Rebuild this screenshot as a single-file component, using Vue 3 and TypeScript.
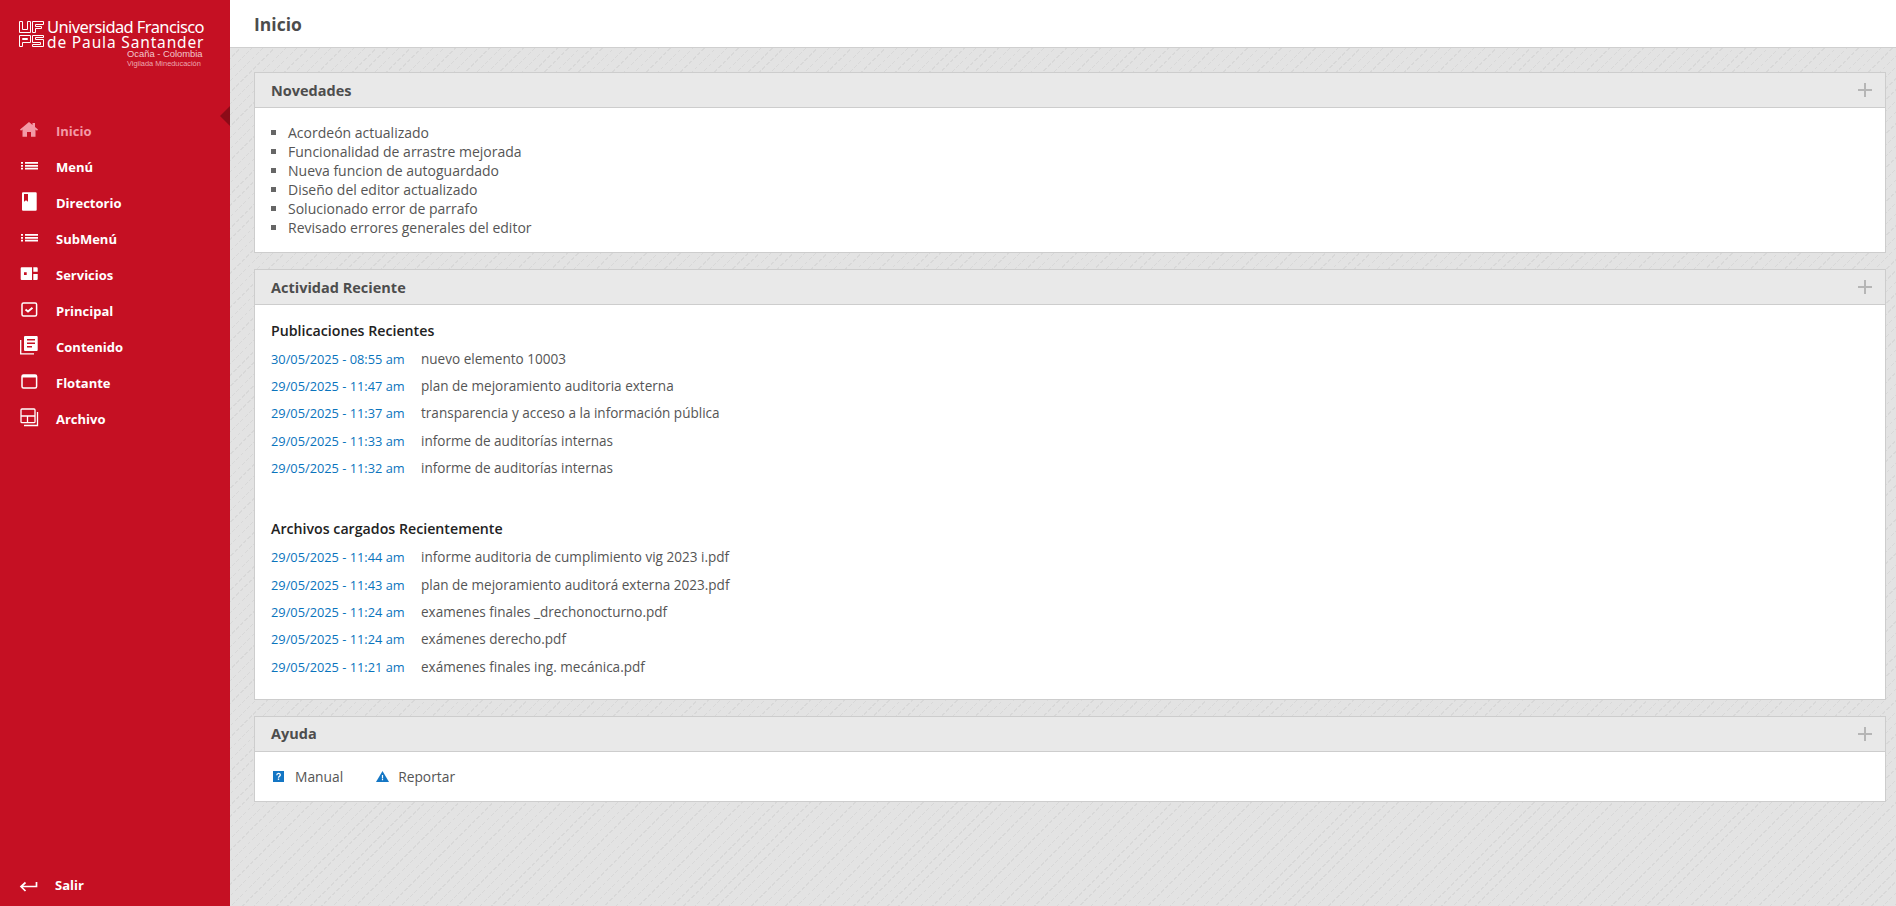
<script setup lang="ts">
interface NavItem {
  label: string
  icon: string
  active?: boolean
}

interface Entry {
  date: string
  title: string
}

const navItems: NavItem[] = [
  { label: 'Inicio', icon: 'home', active: true },
  { label: 'Menú', icon: 'list' },
  { label: 'Directorio', icon: 'book' },
  { label: 'SubMenú', icon: 'list' },
  { label: 'Servicios', icon: 'tiles' },
  { label: 'Principal', icon: 'check' },
  { label: 'Contenido', icon: 'news' },
  { label: 'Flotante', icon: 'window' },
  { label: 'Archivo', icon: 'layers' },
]

const news = [
  'Acordeón actualizado',
  'Funcionalidad de arrastre mejorada',
  'Nueva funcion de autoguardado',
  'Diseño del editor actualizado',
  'Solucionado error de parrafo',
  'Revisado errores generales del editor',
]

const posts: Entry[] = [
  { date: '30/05/2025 - 08:55 am', title: 'nuevo elemento 10003' },
  { date: '29/05/2025 - 11:47 am', title: 'plan de mejoramiento auditoria externa' },
  { date: '29/05/2025 - 11:37 am', title: 'transparencia y acceso a la información pública' },
  { date: '29/05/2025 - 11:33 am', title: 'informe de auditorías internas' },
  { date: '29/05/2025 - 11:32 am', title: 'informe de auditorías internas' },
]

const uploads: Entry[] = [
  { date: '29/05/2025 - 11:44 am', title: 'informe auditoria de cumplimiento vig 2023 i.pdf' },
  { date: '29/05/2025 - 11:43 am', title: 'plan de mejoramiento auditorá externa 2023.pdf' },
  { date: '29/05/2025 - 11:24 am', title: 'examenes finales _drechonocturno.pdf' },
  { date: '29/05/2025 - 11:24 am', title: 'exámenes derecho.pdf' },
  { date: '29/05/2025 - 11:21 am', title: 'exámenes finales ing. mecánica.pdf' },
]
</script>

<template>
  <div class="layout">
    <aside class="sidebar">
      <div class="brand">
        <svg class="brand-mark" width="25" height="26" viewBox="0 0 25 26" fill="none" stroke="#fff" stroke-width="1">
          <path d="M.5.5h3v8h5v-8h3v11h-11zM13.500.5h11v3h-8v2h6v2h-6v4h-3z" />
          <path d="M.5 14.500h11v7h-8v4h-3zM3.500 17.500v1h5v-1zM13.500 14.500h11v2h-8v2h8v7h-11v-2h8v-2h-8z" />
        </svg>
        <div class="brand-text">
          <div class="brand-line1">Universidad Francisco</div>
          <div class="brand-line2">de Paula Santander</div>
          <div class="brand-line3">Ocaña - Colombia</div>
          <div class="brand-line4">Vigilada Mineducación</div>
        </div>
      </div>

      <nav class="nav">
        <a v-for="item in navItems" :key="item.label" class="nav-item" :class="{ active: item.active }">
          <svg class="nav-icon" width="20" height="20" viewBox="0 0 20 20">
            <template v-if="item.icon === 'home'">
              <path fill="currentColor" d="M10 1 1 8.600l1 1.200 1.500-1.300v7.200H8V11h4v4.700h4.500V8.500L18 9.800l1-1.200L16 6V2h-2.500v2z" />
            </template>
            <template v-else-if="item.icon === 'list'">
              <path fill="currentColor" d="M2 5h2v1.800H2zM6 5h13v1.800H6zM2 7.900h2v1.800H2zM6 7.900h13v1.800H6zM2 10.800h2v1.800H2zM6 10.800h13v1.800H6z" />
            </template>
            <template v-else-if="item.icon === 'book'">
              <path fill="currentColor" fill-rule="evenodd" d="M4 -.7h12.700a1 1 0 0 1 1 1v16.400a1 1 0 0 1-1 1H4a1 1 0 0 1-1-1V.3a1 1 0 0 1 1-1zM5 1v7.700l2-1.500 2 1.500V1z" />
            </template>
            <template v-else-if="item.icon === 'tiles'">
              <path fill="currentColor" fill-rule="evenodd" d="M2.700 2.300H13V15H2.700a1 1 0 0 1-1-1V3.300a1 1 0 0 1 1-1zM5 7.300V10h2.700V7.300zM14.300 2.300h3.400a1 1 0 0 1 1 1v3.400h-4.400zM14.300 9h4.400v5a1 1 0 0 1-1 1h-3.400z" />
            </template>
            <template v-else-if="item.icon === 'check'">
              <rect x="3" y="2" width="14.600" height="13" rx="1.500" fill="none" stroke="currentColor" stroke-width="1.500" />
              <path fill="none" stroke="currentColor" stroke-width="2" d="m6.500 8.500 2.500 2 4.500-3.800" />
            </template>
            <template v-else-if="item.icon === 'news'">
              <path fill="currentColor" fill-rule="evenodd" d="M6 -1h11.700a1 1 0 0 1 1 1v13a1 1 0 0 1-1 1H6a1 1 0 0 1-1-1V0a1 1 0 0 1 1-1zM8 2v1.500h8V2zM8 5.500V7h8V5.500zM8 9v1.500h5V9z" />
              <path fill="none" stroke="currentColor" stroke-width="1.300" d="M1.700 3v13.800H15" />
            </template>
            <template v-else-if="item.icon === 'window'">
              <rect x="3" y="2" width="14.600" height="13" rx="1.500" fill="none" stroke="currentColor" stroke-width="1.500" />
              <path fill="currentColor" d="M3 2h14.600v2.500H3z" />
            </template>
            <template v-else>
              <rect x="2" y="0" width="14" height="13.700" rx="1" fill="none" stroke="currentColor" stroke-width="1.300" />
              <path fill="none" stroke="currentColor" stroke-width="1.300" d="M2 7h14M8.500 7v6.700M18.500 3v13.500H5" />
            </template>
          </svg>
          <span>{{ item.label }}</span>
        </a>
      </nav>

      <a class="logout">
        <svg width="20" height="14" viewBox="0 0 20 14" fill="none" stroke="currentColor" stroke-width="1.700">
          <path d="M17.500 4v4.500H2.500M6.500 4.500 2 8.500l4.500 4.500" />
        </svg>
        <span>Salir</span>
      </a>

      <span class="active-arrow"></span>
    </aside>

    <main class="main">
      <header class="topbar">Inicio</header>

      <div class="content">
        <section class="panel">
          <div class="panel-head">
            <h2>Novedades</h2>
            <span class="plus"></span>
          </div>
          <div class="panel-body news">
            <ul>
              <li v-for="line in news" :key="line">{{ line }}</li>
            </ul>
          </div>
        </section>

        <section class="panel">
          <div class="panel-head">
            <h2>Actividad Reciente</h2>
            <span class="plus"></span>
          </div>
          <div class="panel-body activity">
            <h3>Publicaciones Recientes</h3>
            <div v-for="(row, i) in posts" :key="i" class="entry">
              <span class="date">{{ row.date }}</span>
              <span>{{ row.title }}</span>
            </div>
            <h3 class="second">Archivos cargados Recientemente</h3>
            <div v-for="(row, i) in uploads" :key="'u' + i" class="entry">
              <span class="date">{{ row.date }}</span>
              <span>{{ row.title }}</span>
            </div>
          </div>
        </section>

        <section class="panel">
          <div class="panel-head">
            <h2>Ayuda</h2>
            <span class="plus"></span>
          </div>
          <div class="panel-body help">
            <a class="help-link">
              <svg width="11" height="11" viewBox="0 0 11 11">
                <rect width="11" height="11" fill="#1476c4" />
                <path fill="none" stroke="#fff" stroke-width="1.300" d="M3.800 4.200c0-2.300 3.500-2.300 3.500-.3 0 1.300-1.800 1.300-1.800 2.800" />
                <path fill="#fff" d="M4.800 7.500h1.400v1.400H4.800z" />
              </svg>
              <span>Manual</span>
            </a>
            <a class="help-link tight">
              <svg width="13" height="11" viewBox="0 0 13 11">
                <path fill="#1476c4" d="M6.500 0 13 11H0z" />
                <path fill="#fff" d="M5.900 4h1.200v3.500H5.900zM5.900 8h1.200v1.300H5.900z" />
              </svg>
              <span>Reportar</span>
            </a>
          </div>
        </section>
      </div>
    </main>
  </div>
</template>

<style scoped>
.layout {
  display: flex;
  height: 906px;
  font-family: 'Open Sans', 'Noto Sans', sans-serif;
  color: #555;
  overflow: hidden;
}

.sidebar {
  position: relative;
  flex: 0 0 230px;
  display: flex;
  flex-direction: column;
  background: #c51023;
  color: #fff;
}

.brand {
  display: flex;
  gap: 3px;
  padding: 19px 0 0 19px;
  height: 113px;
  box-sizing: border-box;
}

.brand-mark {
  margin-top: 2px;
}

.brand-text {
  font-family: 'Noto Sans', sans-serif;
  width: 158px;
}

.brand-line1 {
  font-size: 16.5px;
  line-height: 15.5px;
  white-space: nowrap;
  letter-spacing: -0.6px;
}

.brand-line2 {
  font-size: 15.5px;
  line-height: 15px;
  white-space: nowrap;
  letter-spacing: 0.85px;
}

.brand-line3 {
  font-family: 'Liberation Sans', sans-serif;
  font-size: 9.4px;
  line-height: 10px;
  margin: -1px 0 0 80px;
  white-space: nowrap;
  color: #f3c7cc;
}

.brand-line4 {
  font-family: 'Liberation Sans', sans-serif;
  font-size: 7.4px;
  line-height: 9px;
  margin-left: 80px;
  white-space: nowrap;
  color: #eda9b1;
}

.nav {
  display: flex;
  flex-direction: column;
}

.nav-item {
  display: flex;
  align-items: center;
  height: 36px;
  padding-left: 19px;
  gap: 17px;
  font-size: 13px;
  font-weight: 700;
  color: #fff;
}

.nav-item.active {
  color: #f39aa6;
}

.nav-icon {
  overflow: visible;
}

.logout {
  margin-top: auto;
  display: flex;
  align-items: center;
  gap: 16px;
  height: 42px;
  padding-left: 19px;
  font-size: 13px;
  font-weight: 700;
}

.active-arrow {
  position: absolute;
  right: 0;
  top: 106px;
  border-style: solid;
  border-width: 10px 10px 10px 0;
  border-color: transparent #8c0b18 transparent transparent;
}

.main {
  flex: 1;
  display: flex;
  flex-direction: column;
  min-width: 0;
}

.topbar {
  height: 47px;
  flex: none;
  display: flex;
  align-items: center;
  padding-left: 24px;
  background: #fff;
  border-bottom: 1px solid #cfcfcf;
  font-size: 17.5px;
  font-weight: 700;
  color: #4c4c4c;
}

.content {
  flex: 1;
  display: flex;
  flex-direction: column;
  gap: 16px;
  padding: 24px 10px 0 24px;
  background-color: #e3e3e3;
  background-image:
    repeating-linear-gradient(45deg, #e3e3e3 0 2px, transparent 2px 6px),
    repeating-linear-gradient(135deg, transparent 0 7px, #d8d8d8 7px 8px);
}

.panel {
  border: 1px solid #cdcdcd;
  background: #fff;
}

.panel-head {
  display: flex;
  align-items: center;
  justify-content: space-between;
  height: 34px;
  padding: 0 13px 0 16px;
  background: #e9e9e9;
  border-bottom: 1px solid #cdcdcd;
}

.panel-head h2 {
  margin: 0;
  font-size: 14.5px;
  font-weight: 700;
  color: #4d4d4d;
}

.plus {
  width: 14px;
  height: 14px;
  background:
    linear-gradient(#b6b6b6, #b6b6b6) center / 100% 2px no-repeat,
    linear-gradient(#b6b6b6, #b6b6b6) center / 2px 100% no-repeat;
}

.panel-body {
  font-size: 14px;
  color: #555;
}

.news {
  padding: 15px 16px 15px;
}

.news ul {
  margin: 0;
  padding: 0;
  list-style: none;
}

.news li {
  display: flex;
  align-items: center;
  gap: 12px;
  height: 19px;
  line-height: 19px;
}

.news li::before {
  content: '';
  width: 5px;
  height: 5px;
  background: #666;
}

.activity {
  padding: 16px 16px 18.5px;
  font-size: 13.55px;
}

.activity h3 {
  margin: 0 0 5px;
  font-size: 14.2px;
  font-weight: 600;
  line-height: 19px;
  color: #222;
}

.activity h3.second {
  margin-top: 37.5px;
}

.entry {
  display: flex;
  align-items: center;
  height: 27.4px;
}

.date {
  width: 150px;
  flex: none;
  color: #0a74bd;
  font-size: 12.8px;
}

.help {
  display: flex;
  gap: 33px;
  padding: 15px 16px 14.5px 18px;
  font-size: 13.8px;
}

.help-link {
  display: flex;
  align-items: center;
  gap: 11px;
  line-height: 20px;
}

.help-link.tight {
  gap: 9px;
}
</style>

<style>
body {
  background: #e3e3e3;
}
</style>
